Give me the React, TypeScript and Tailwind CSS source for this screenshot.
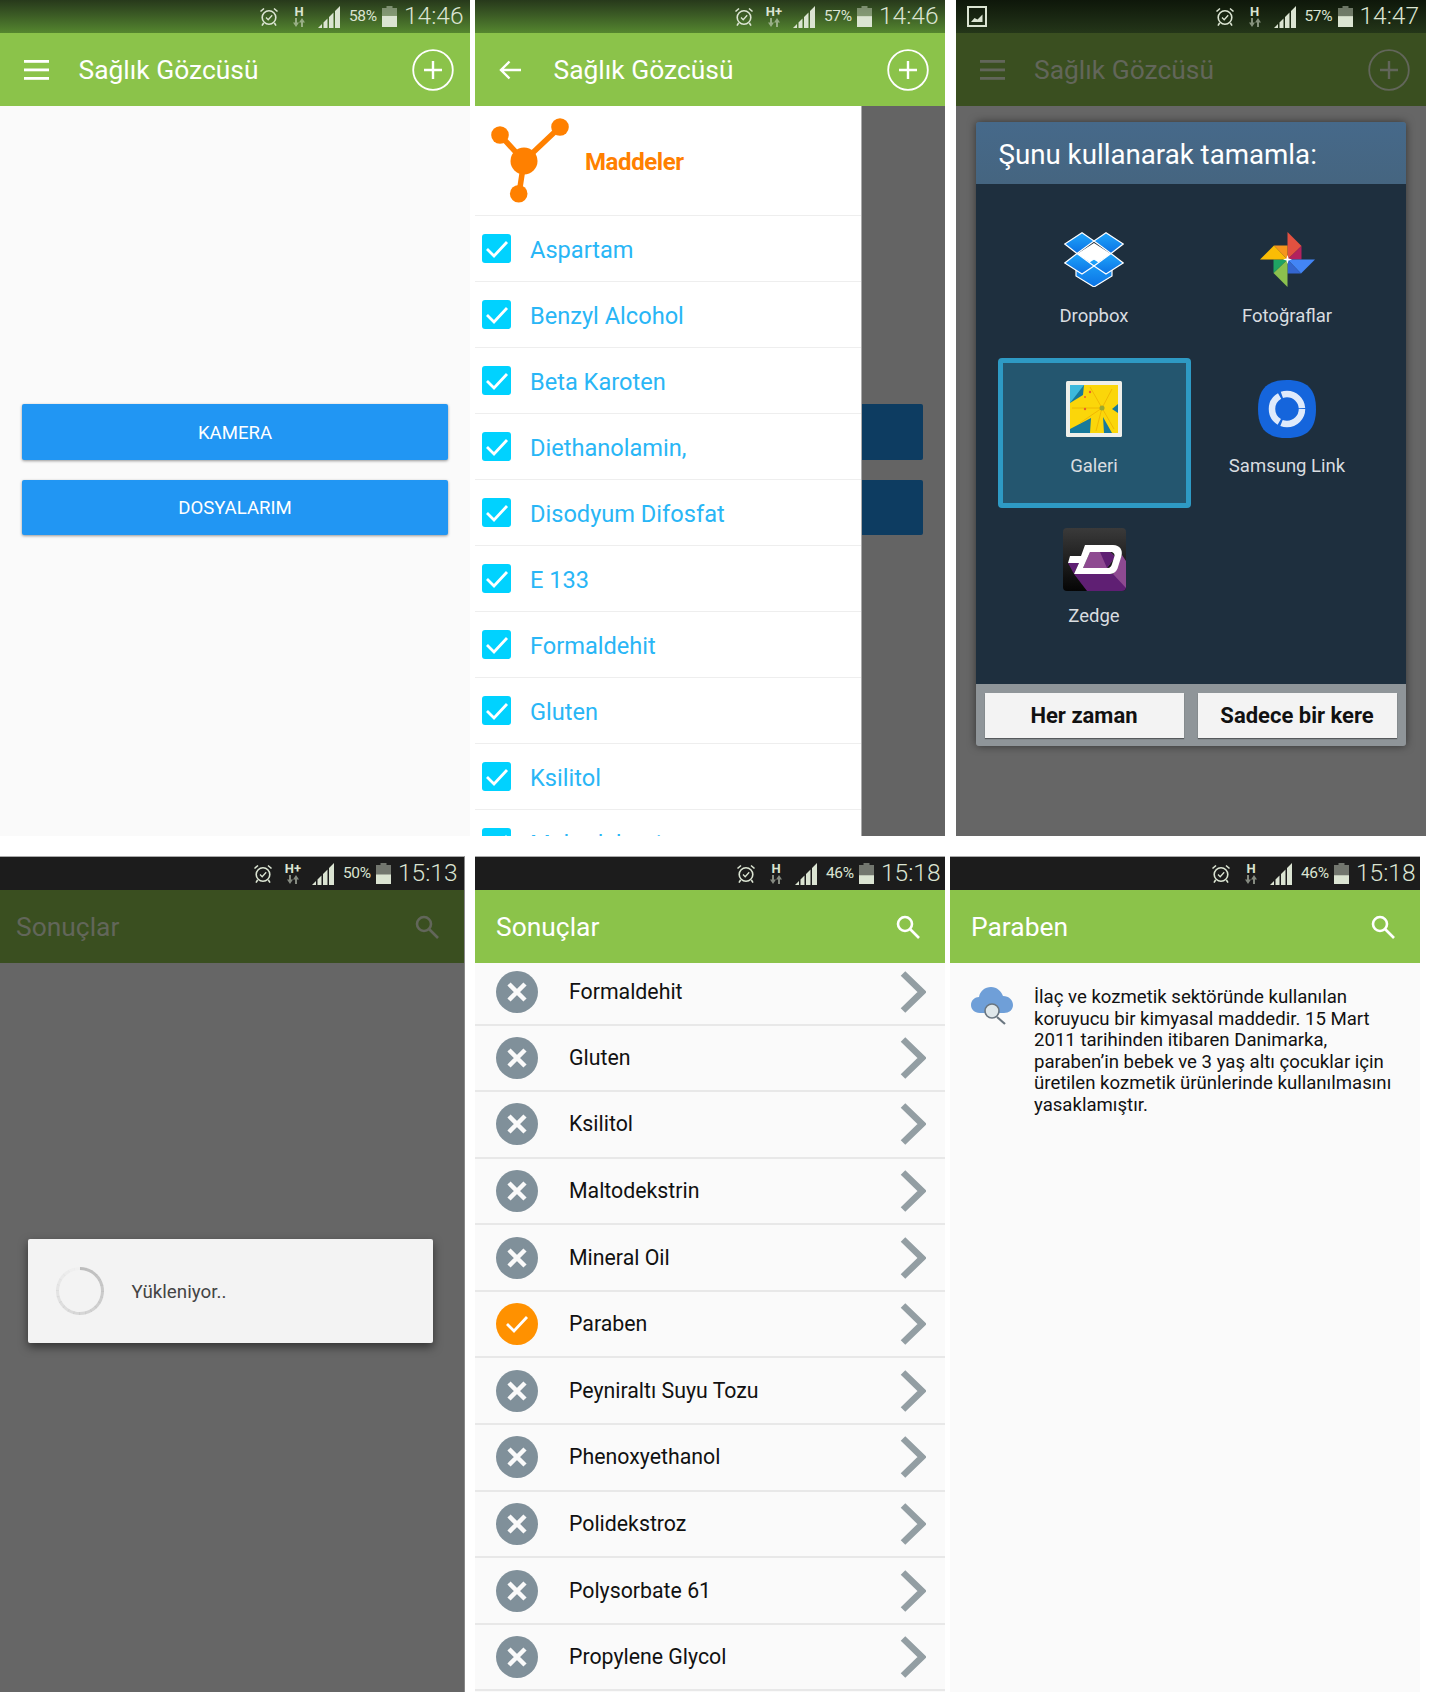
import React from "react";

const APP_TITLE = "Sağlık Gözcüsü";

const substances = [
  "Aspartam",
  "Benzyl Alcohol",
  "Beta Karoten",
  "Diethanolamin,",
  "Disodyum Difosfat",
  "E 133",
  "Formaldehit",
  "Gluten",
  "Ksilitol",
  "Maltodekstrin",
];

const results = [
  "Formaldehit",
  "Gluten",
  "Ksilitol",
  "Maltodekstrin",
  "Mineral Oil",
  "Paraben",
  "Peyniraltı Suyu Tozu",
  "Phenoxyethanol",
  "Polidekstroz",
  "Polysorbate 61",
  "Propylene Glycol",
];

const paragraph = [
  "İlaç ve kozmetik sektöründe kullanılan",
  "koruyucu bir kimyasal maddedir. 15 Mart",
  "2011 tarihinden itibaren Danimarka,",
  "paraben’in bebek ve 3 yaş altı çocuklar için",
  "üretilen kozmetik ürünlerinde kullanılmasını",
  "yasaklamıştır.",
];

const AlarmIcon = () => (
  <svg width="20" height="20" viewBox="0 0 20 20" fill="none" stroke="currentColor" strokeWidth="1.600">
    <circle cx="10" cy="10.500" r="6.800" />
    <path d="M7 10.500l2.200 2.200 4-4.400" strokeWidth="1.300" />
    <path d="M1.500 4.500L5 1.500M18.500 4.500L15 1.500M4.600 16l-1.600 2.600M15.400 16l1.600 2.600" />
  </svg>
);

const SignalIcon = () => (
  <svg width="22" height="22" viewBox="0 0 22 22" fill="currentColor">
    <path d="M0 22l4-4v4zM5.500 22v-5.500l4-4V22zM11 22V11l4.500-4.500V22zM17 22V5l5-5v22z" />
  </svg>
);

const BatteryIcon = ({ level }: { level: number }) => (
  <svg width="15" height="21" viewBox="0 0 15 21" fill="currentColor">
    <rect x="4.500" y="0" width="6" height="2" opacity="0.45" />
    <rect x="0" y="2" width="15" height="19" opacity="0.45" />
    <rect x="0" y={21 - 19 * level} width="15" height={19 * level} />
  </svg>
);

const NetworkIcon = ({ label }: { label: string }) => (
  <div className="w-[24px] flex flex-col items-center">
    <span className="text-[13px] leading-[12px] font-bold">{label}</span>
    <svg width="12" height="9" viewBox="0 0 12 9" fill="currentColor" opacity="0.55">
      <path d="M2 0h2v4.500h2L3 9 0 4.500h2zM8 9h2V4.500h2L9 0 6 4.500h2z" />
    </svg>
  </div>
);

type StatusProps = {
  bg: string;
  network: string;
  percent: number;
  time: string;
  left?: React.ReactNode;
  narrowTime?: boolean;
};

const StatusBar = ({ bg, network, percent, time, left, narrowTime }: StatusProps) => (
  <div className={`h-[33px] shrink-0 flex items-center pr-[9px] text-[#dbe4d2] ${bg}`}>
    <div className="flex-1 pl-[11px]">{left}</div>
    <AlarmIcon />
    <div className="ml-[8px]">
      <NetworkIcon label={network} />
    </div>
    <div className="ml-[7px]">
      <SignalIcon />
    </div>
    <span className="ml-[9px] w-[29px] text-[15.500px] tracking-[-0.4px] whitespace-nowrap">{percent}%</span>
    <div className="ml-[4px]">
      <BatteryIcon level={percent / 100} />
    </div>
    <span className={`ml-[7px] text-[24.500px] font-light whitespace-nowrap ${narrowTime ? "w-[55px]" : "w-[57px]"}`}>
      {time}
    </span>
  </div>
);

const MenuIcon = () => (
  <svg width="25" height="20" viewBox="0 0 25 20" fill="currentColor">
    <rect y="0" width="25" height="2.800" />
    <rect y="8.500" width="25" height="2.800" />
    <rect y="17" width="25" height="2.800" />
  </svg>
);

const BackIcon = () => (
  <svg width="22" height="20" viewBox="0 0 22 20" fill="none" stroke="currentColor" strokeWidth="2.400">
    <path d="M22 10H2M10.500 1.500L2 10l8.500 8.500" />
  </svg>
);

const PlusCircle = () => (
  <svg width="42" height="42" viewBox="0 0 42 42" fill="none" stroke="currentColor" strokeWidth="1.800">
    <circle cx="21" cy="21" r="19.800" />
    <path d="M21 12v18M12 21h18" strokeWidth="2.400" />
  </svg>
);

const SearchIcon = () => (
  <svg width="24" height="24" viewBox="0 0 24 24" fill="none" stroke="currentColor" strokeWidth="2.600">
    <circle cx="9" cy="9" r="7" />
    <path d="M14 14l9 9" />
  </svg>
);

const HomeBar = ({ back, dim }: { back?: boolean; dim?: boolean }) => (
  <div
    className={`h-[73px] shrink-0 flex items-center pl-[24px] pr-[15px] ${
      dim ? "bg-[#3a4f20] text-[#62665a]" : "bg-[#8bc34a] text-white"
    }`}
  >
    <div className="w-[54.500px]">{back ? <BackIcon /> : <MenuIcon />}</div>
    <span className="flex-1 pt-[3px] text-[26.400px] whitespace-nowrap">{APP_TITLE}</span>
    <div className="mr-[1px]">
      <PlusCircle />
    </div>
  </div>
);

const SearchBar = ({ title, dim }: { title: string; dim?: boolean }) => (
  <div
    className={`h-[73px] shrink-0 flex items-center pr-[25px] ${
      dim ? "pl-[16px] bg-[#3a4f20] text-[#62665a]" : "pl-[21px] bg-[#8bc34a] text-white"
    }`}
  >
    <span className="flex-1 pt-[2px] text-[26.400px] whitespace-nowrap">{title}</span>
    <SearchIcon />
  </div>
);

const Buttons = ({ dim }: { dim?: boolean }) => {
  const color = dim ? "bg-[#0d3c61]" : "bg-[#2196f3] shadow-[0_1px_3px_rgba(0,0,0,0.4)]";
  return (
    <div className="pt-[298px] pl-[22px] w-[448px] flex flex-col gap-[20px]">
      <div className={`h-[56px] rounded-[2px] flex items-center justify-center pt-[3px] text-white text-[18.600px] ${color}`}>
        KAMERA
      </div>
      <div className={`h-[55px] rounded-[2px] flex items-center justify-center pt-[3px] text-white text-[18.600px] ${color}`}>
        DOSYALARIM
      </div>
    </div>
  );
};

const MoleculeIcon = () => (
  <svg width="84" height="86" viewBox="0 0 84 86" fill="#ff8000">
    <path d="M33 43L9 17M33 43L69 9M33 43l-5 33" stroke="#ff8000" strokeWidth="5.500" fill="none" />
    <circle cx="9" cy="17" r="8.800" />
    <circle cx="69" cy="9" r="8.800" />
    <circle cx="33" cy="43" r="13.500" />
    <circle cx="27.700" cy="75.700" r="8.800" />
  </svg>
);

const CheckBox = () => (
  <div className="w-[29px] h-[29px] shrink-0 rounded-[3px] bg-[#00d2ff] flex items-center justify-center">
    <svg width="24" height="20" viewBox="0 0 24 20" fill="none" stroke="#fff" strokeWidth="2.800">
      <path d="M2 10l7 7L22 3" />
    </svg>
  </div>
);

const SubstanceDrawer = () => (
  <div className="absolute left-0 top-0 bottom-0 w-[387px] bg-white border-r border-[#aaa] overflow-hidden">
    <div className="h-[110px] flex items-center border-b border-[#eee] pl-[16px]">
      <MoleculeIcon />
      <span className="ml-[10px] mt-[3px] text-[24px] font-bold text-[#ff8000] tracking-[-0.4px]">Maddeler</span>
    </div>
    {substances.map((name) => (
      <div key={name} className="h-[66px] flex items-center border-b border-[#eee] pl-[7px] gap-[19px] text-[#29b6f6] text-[23.600px]">
        <CheckBox />
        <span className="mt-[4px]">{name}</span>
      </div>
    ))}
  </div>
);

const DropboxIcon = () => (
  <svg width="60" height="55" viewBox="0 0 60 55">
    <defs>
      <linearGradient id="dbx" x1="0" y1="0" x2="0" y2="1">
        <stop offset="0" stopColor="#1fa5fb" />
        <stop offset="1" stopColor="#0b72e4" />
      </linearGradient>
    </defs>
    <polygon points="13,22 30,11 47,22 30,33" fill="#fff" />
    <g fill="url(#dbx)" stroke="#fff" strokeWidth="1.200">
      <polygon points="12,38 30,27 48,38 48,44 30,55 12,44" />
      <polygon points="0.800,12 18,0.800 30,9 13,21.500" />
      <polygon points="59.200,12 42,0.800 30,9 47,21.500" />
      <polygon points="0.800,31 18,42 30,34 13,21.500" />
      <polygon points="59.200,31 42,42 30,34 47,21.500" />
    </g>
  </svg>
);

const PhotosIcon = () => (
  <svg width="55" height="55" viewBox="0 0 55 55">
    <polygon points="27.500,0 41.500,14 27.500,27.500" fill="#e25140" />
    <polygon points="41.500,14 41.500,27.500 27.500,27.500" fill="#b3215e" />
    <polygon points="55,27.500 41,41.500 27.500,27.500" fill="#4385f5" />
    <polygon points="41,41.500 27.500,41.500 27.500,27.500" fill="#3466d0" />
    <polygon points="27.500,55 13.500,41 27.500,27.500" fill="#8bc14e" />
    <polygon points="13.500,41 13.500,27.500 27.500,27.500" fill="#1fa463" />
    <polygon points="0,27.500 14,13.500 27.500,27.500" fill="#fbbc05" />
    <polygon points="14,13.500 27.500,13.500 27.500,27.500" fill="#f6951d" />
    <path d="M27.500 23l1 3.500 3.500 1-3.500 1-1 3.500-1-3.500-3.500-1 3.500-1z" fill="#fff" />
  </svg>
);

const GalleryIcon = () => (
  <svg width="56" height="56" viewBox="0 0 56 56">
    <rect width="56" height="56" rx="1.500" fill="#efefe9" />
    <rect x="4" y="4" width="48" height="48" fill="#17799b" />
    <polygon points="4,4 18,4 4,22" fill="#3db9dc" />
    <path d="M18 4H52V23L46 28L52 32V52H46L37 36L38 52H24L25 37L4 48V22L17 14z" fill="#fbd60a" />
    <path d="M36 27L6 27M36 27L14 42M36 27L30 50M36 27L48 48M36 27L46 8M36 27L24 6" stroke="#eeb000" strokeWidth="0.800" fill="none" />
    <circle cx="36" cy="27" r="2.500" fill="#9aa830" />
    <circle cx="19" cy="28" r="1.200" fill="#e8602c" />
    <circle cx="24" cy="11" r="1.200" fill="#e8602c" />
    <circle cx="19" cy="16" r="1" fill="#e8602c" />
  </svg>
);

const SamsungLinkIcon = () => (
  <svg width="58" height="58" viewBox="0 0 58 58">
    <path d="M29 0c20 0 29 9 29 29s-9 29-29 29S0 49 0 29 9 0 29 0z" fill="#1565dc" />
    <circle cx="29" cy="29" r="15" fill="none" stroke="#dfeafb" strokeWidth="6.500" strokeDasharray="29 2.500 31 2.500 27.700 2.500" />
  </svg>
);

const ZedgeIcon = () => (
  <svg width="63" height="63" viewBox="0 0 63 63">
    <defs>
      <linearGradient id="zdg" x1="0" y1="0" x2="0" y2="1">
        <stop offset="0" stopColor="#3a3a3a" />
        <stop offset="1" stopColor="#050505" />
      </linearGradient>
    </defs>
    <rect width="63" height="63" rx="4" fill="url(#zdg)" />
    <path d="M5 35H16L11 46 24 63H59a4 4 0 0 0 4-4V40L50 46H11z" fill="#5f1f73" />
    <path d="M59 27L63 33V60L50 46z" fill="#8e4a91" />
    <path d="M27 24H47L52 29 44 40H20z" fill="#8e4a91" />
    <path d="M37 24H47L52 29 44 40z" fill="#5f1f73" />
    <path
      d="M22 17H50C57 17 60 22 58.500 28L55 39C54 43 51 46 47 46H11L16 35H5L7 28H18zM27 24L20 40H45C47 40 48.500 38 49 36L51.500 28C52 26 50 24 48 24z"
      fill="#fff"
      fillRule="evenodd"
    />
  </svg>
);

const AppCell = ({ label, icon, selected, top }: { label: string; icon: React.ReactNode; selected?: boolean; top: string }) => (
  <div
    className={`h-[150px] flex flex-col items-center text-[#d9dde0] text-[18.500px] ${top} ${
      selected ? "bg-[#24566f] border-[5px] border-[#2e9ac4] rounded-[4px]" : ""
    }`}
  >
    <div className="h-[58px] flex items-center justify-center">{icon}</div>
    <span className="mt-[15.500px] leading-[24px]">{label}</span>
  </div>
);

const ChooserDialog = () => (
  <div className="ml-[20px] mt-[16px] w-[430px] h-[624px] flex flex-col rounded-[3px] overflow-hidden shadow-[0_0_8px_rgba(0,0,0,0.5)]">
    <div className="h-[62px] shrink-0 bg-gradient-to-b from-[#46698a] to-[#456580] flex items-center pl-[23px] pt-[3px] text-white text-[27.700px] whitespace-nowrap">
      Şunu kullanarak tamamla:
    </div>
    <div className="flex-1 bg-[#1e2f3e] pt-[24px] px-[22px]">
      <div className="grid grid-cols-2">
        <AppCell label="Dropbox" icon={<DropboxIcon />} top="pt-[22px]" />
        <AppCell label="Fotoğraflar" icon={<PhotosIcon />} top="pt-[22px]" />
        <AppCell label="Galeri" icon={<GalleryIcon />} selected top="pt-[17px]" />
        <AppCell label="Samsung Link" icon={<SamsungLinkIcon />} top="pt-[22px]" />
        <AppCell label="Zedge" icon={<ZedgeIcon />} top="pt-[22px]" />
      </div>
    </div>
    <div className="h-[62px] shrink-0 bg-[#8f9599] flex items-center pl-[9px] gap-[14px]">
      <div className="w-[199px] h-[45px] bg-[#f3f3f3] flex items-center justify-center text-[22px] font-bold text-[#111] shadow-[0_1px_1px_rgba(0,0,0,0.4)]">
        Her zaman
      </div>
      <div className="w-[199px] h-[45px] bg-[#f3f3f3] flex items-center justify-center text-[22px] font-bold text-[#111] shadow-[0_1px_1px_rgba(0,0,0,0.4)]">
        Sadece bir kere
      </div>
    </div>
  </div>
);

const ScreenshotIcon = () => (
  <svg width="20" height="21" viewBox="0 0 20 21" fill="none" stroke="currentColor" strokeWidth="2">
    <rect x="1" y="1" width="18" height="19" />
    <path d="M4 16l3.500-4 3 1.500 5-5V16z" fill="currentColor" strokeWidth="0" />
  </svg>
);

// arc fades out going round clockwise from the top
const spinnerSegments = Array.from({ length: 24 }, (_, i) => {
  const a1 = (i / 24) * 2 * Math.PI;
  const a2 = ((i + 1.1) / 24) * 2 * Math.PI;
  const r = 22.5;
  const point = (a: number) => `${(24 + r * Math.sin(a)).toFixed(2)} ${(24 - r * Math.cos(a)).toFixed(2)}`;
  return { d: `M${point(a1)}A${r} ${r} 0 0 1 ${point(a2)}`, opacity: 1 - i / 24 };
});

const LoadingDialog = () => (
  <div className="ml-[27.500px] mt-[276px] w-[405px] h-[104px] bg-[#f3f3f3] rounded-[2px] shadow-[0_4px_10px_rgba(0,0,0,0.5)] flex items-center pl-[28px]">
    <svg width="48" height="48" viewBox="0 0 48 48" fill="none" stroke="#bdbdbd" strokeWidth="3">
      {spinnerSegments.map((s) => (
        <path key={s.d} d={s.d} opacity={s.opacity} />
      ))}
    </svg>
    <span className="ml-[28px] mt-[2px] text-[18.800px] text-[#444]">Yükleniyor..</span>
  </div>
);

const CrossBadge = () => (
  <div className="w-[42px] h-[42px] rounded-full bg-[#80909a] flex items-center justify-center">
    <svg width="22" height="22" viewBox="0 0 22 22" stroke="#fafafa" strokeWidth="4.500">
      <path d="M3 3l16 16M19 3L3 19" />
    </svg>
  </div>
);

const CheckBadge = () => (
  <div className="w-[42px] h-[42px] rounded-full bg-[#ff9100] flex items-center justify-center">
    <svg width="24" height="20" viewBox="0 0 24 20" fill="none" stroke="#fff" strokeWidth="2.800">
      <path d="M2 10l7 7L22 3" />
    </svg>
  </div>
);

const ResultRow = ({ name, first }: { name: string; first: boolean }) => (
  <div
    className={`shrink-0 flex items-center pl-[21px] pr-[19px] border-b-2 border-[#e8e8e8] text-[21.300px] text-[#111] ${
      first ? "h-[62.500px] pb-[3px]" : "h-[66.600px]"
    }`}
  >
    {name === "Paraben" ? <CheckBadge /> : <CrossBadge />}
    <span className="ml-[31px] flex-1">{name}</span>
    <svg width="26" height="42" viewBox="0 0 26 42" fill="none" stroke="#939ea3" strokeWidth="6.500">
      <path d="M3 2.500L22 21 3 39.500" />
    </svg>
  </div>
);

const CloudIcon = () => (
  <svg width="42" height="39" viewBox="0 0 42 39">
    <path d="M9 27C3 27 0 23 0 19c0-5 4-8 8-8 1-6 6-10 12-10 6 0 10 4 12 9 6 0 10 4 10 9s-4 8-9 8z" fill="#6f9fd8" />
    <path d="M26 31l8 7" stroke="#6a7680" strokeWidth="2.200" />
    <circle cx="21" cy="25" r="7" fill="#dfe7ea" stroke="#6a7680" strokeWidth="1.600" />
  </svg>
);

const App = () => {
  return (
    <div className="w-[1436px] h-[1703px] bg-white [font-family:Roboto,sans-serif] overflow-hidden">
      {/* top row */}
      <div className="flex h-[836px]">
        <div className="w-[470px] flex flex-col bg-[#fafafa]">
          <StatusBar bg="bg-gradient-to-b from-[#27391b] to-[#55872f]" network="H" percent={58} time="14:46" />
          <HomeBar />
          <Buttons />
        </div>

        <div className="ml-[5px] w-[470px] flex flex-col">
          <StatusBar bg="bg-gradient-to-b from-[#27391b] to-[#55872f]" network="H+" percent={57} time="14:46" />
          <HomeBar back />
          <div className="relative flex-1 bg-[#646464]">
            <Buttons dim />
            <SubstanceDrawer />
          </div>
        </div>

        <div className="ml-[10.500px] w-[470px] flex flex-col bg-[#666]">
          <StatusBar
            bg="bg-gradient-to-b from-[#0e170a] to-[#243619]"
            network="H"
            percent={57}
            time="14:47"
            left={<ScreenshotIcon />}
          />
          <HomeBar dim />
          <ChooserDialog />
        </div>
      </div>

      {/* bottom row */}
      <div className="mt-[20px] flex h-[836px]">
        <div className="w-[465px] flex flex-col bg-[#666] border-t border-[#aaa] border-r-[1px] border-r-[#888]">
          <StatusBar bg="bg-[#1c1c1c]" network="H+" percent={50} time="15:13" />
          <SearchBar title="Sonuçlar" dim />
          <LoadingDialog />
        </div>

        <div className="ml-[10px] w-[470px] flex flex-col bg-[#fafafa] border-t border-[#aaa] overflow-hidden">
          <StatusBar bg="bg-[#1c1c1c]" network="H" percent={46} time="15:18" narrowTime />
          <SearchBar title="Sonuçlar" />
          {results.map((name, i) => (
            <ResultRow key={name} name={name} first={i === 0} />
          ))}
        </div>

        <div className="ml-[5px] w-[470px] flex flex-col bg-[#fafafa] border-t border-[#aaa]">
          <StatusBar bg="bg-[#1c1c1c]" network="H" percent={46} time="15:18" narrowTime />
          <SearchBar title="Paraben" />
          <div className="flex pt-[23px] pl-[21px]">
            <CloudIcon />
            <div className="ml-[21px] mt-[1px] text-[18.600px] leading-[21.600px] text-[#111]">
              {paragraph.map((line) => (
                <div key={line} className="whitespace-nowrap">
                  {line}
                </div>
              ))}
            </div>
          </div>
        </div>
      </div>
    </div>
  );
};

export default App;
